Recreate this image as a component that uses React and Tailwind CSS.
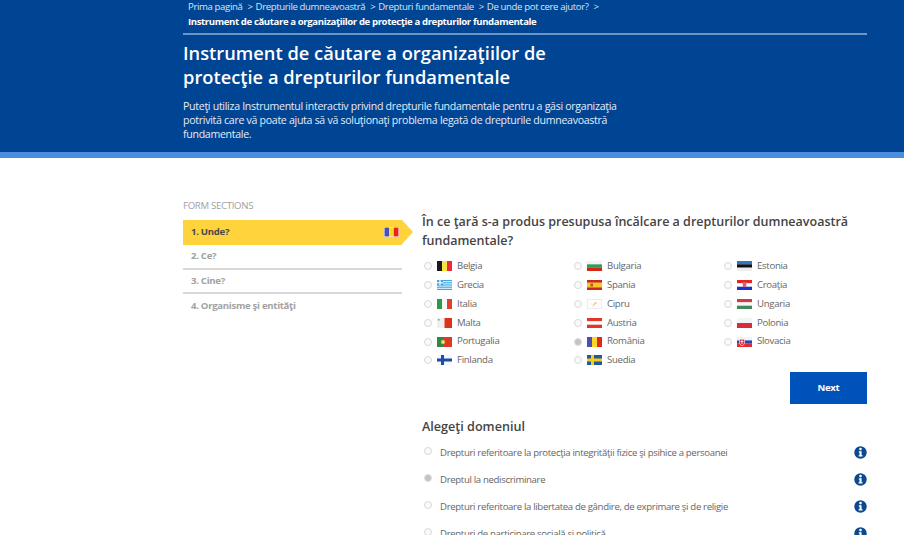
const Stripes = ({ c, v }) => (
  <svg width="15" height="10" viewBox="0 0 15 10" className="shrink-0">
    {c.map((col, i) =>
      v ? (
        <rect key={i} x={(i * 15) / c.length} y="0" width={15 / c.length + 0.1} height="10" fill={col} />
      ) : (
        <rect key={i} x="0" y={(i * 10) / c.length} width="15" height={10 / c.length + 0.1} fill={col} />
      )
    )}
  </svg>
);

const Svg = ({ children }) => (
  <svg width="15" height="10" viewBox="0 0 15 10" className="shrink-0">
    {children}
  </svg>
);

const flags = {
  be: <Stripes v c={["#1a1a1a", "#fae042", "#ed2939"]} />,
  bg: <Stripes c={["#f2f2f2", "#2e9b5f", "#d62612"]} />,
  ee: <Stripes c={["#2f76c9", "#111111", "#eeeeee"]} />,
  gr: (
    <Svg>
      <rect width="15" height="10" fill="#f4f9fd" />
      {[0, 2.2, 4.4, 6.6, 8.8].map((y) => (
        <rect key={y} y={y} width="15" height="1.2" fill="#3fa7e6" />
      ))}
      <rect width="6" height="5.5" fill="#3fa7e6" />
      <rect x="2.4" width="1.2" height="5.5" fill="#fff" />
      <rect y="2.2" width="6" height="1.1" fill="#fff" />
    </Svg>
  ),
  es: (
    <Svg>
      <rect width="15" height="10" fill="#c9281c" />
      <rect y="2.5" width="15" height="5" fill="#f6c52c" />
      <rect x="3.5" y="3.5" width="2.5" height="3" fill="#b5562a" />
    </Svg>
  ),
  hr: (
    <Svg>
      <rect width="15" height="3.4" fill="#e5261f" />
      <rect y="3.4" width="15" height="3.3" fill="#fff" />
      <rect y="6.7" width="15" height="3.3" fill="#1c2fd0" />
      <rect x="5.7" y="2.2" width="3.6" height="4.6" fill="#d8606a" />
    </Svg>
  ),
  it: <Stripes v c={["#2b9a46", "#f6f6f6", "#e0402f"]} />,
  cy: (
    <Svg>
      <rect x="0.25" y="0.25" width="14.5" height="9.5" fill="#fdfdfd" stroke="#dddddd" strokeWidth="0.5" />
      <path d="M5.5 6.5 L8 3.5 L10 3.2 L9 5 L7 6 L6 7.5 Z" fill="#eec26c" />
    </Svg>
  ),
  hu: <Stripes c={["#cf3a46", "#f7f7f7", "#3f8a5c"]} />,
  mt: (
    <Svg>
      <rect width="7.5" height="10" fill="#f0f0f0" />
      <rect x="7.5" width="7.5" height="10" fill="#dc3218" />
      <rect x="1" y="1" width="1.6" height="1.6" fill="#999" />
    </Svg>
  ),
  at: <Stripes c={["#e5352b", "#ffffff", "#e5352b"]} />,
  pl: <Stripes c={["#f4f4f4", "#dc2a3c"]} />,
  pt: (
    <Svg>
      <rect width="6" height="10" fill="#2c8a42" />
      <rect x="6" width="9" height="10" fill="#dd3a26" />
      <circle cx="6" cy="5" r="2.2" fill="#e8b83c" />
      <circle cx="6" cy="5" r="1.1" fill="#e8e8e8" />
    </Svg>
  ),
  ro: <Stripes v c={["#4a4fb0", "#fbd626", "#e0281c"]} />,
  sk: (
    <Svg>
      <rect width="15" height="3.4" fill="#f3f3f3" />
      <rect y="3.4" width="15" height="3.3" fill="#2248b8" />
      <rect y="6.7" width="15" height="3.3" fill="#e32b2b" />
      <path d="M2.5 2.2 H7.5 V6 Q7.5 8 5 8.7 Q2.5 8 2.5 6 Z" fill="#dd2b2b" stroke="#fff" strokeWidth="0.6" />
      <rect x="4.6" y="3" width="0.8" height="4" fill="#fff" />
      <rect x="3.6" y="4" width="2.8" height="0.8" fill="#fff" />
    </Svg>
  ),
  fi: (
    <Svg>
      <rect width="15" height="10" fill="#f6f8fb" />
      <rect x="4" width="3" height="10" fill="#1a4fa8" />
      <rect y="3.5" width="15" height="3" fill="#1a4fa8" />
    </Svg>
  ),
  se: (
    <Svg>
      <rect width="15" height="10" fill="#1f5a9e" />
      <rect x="4" width="3" height="10" fill="#f8cc1c" />
      <rect y="3.5" width="15" height="3" fill="#f8cc1c" />
    </Svg>
  ),
};

const countries = [
  ["Belgia", "be"], ["Bulgaria", "bg"], ["Estonia", "ee"],
  ["Grecia", "gr"], ["Spania", "es"], ["Croaţia", "hr"],
  ["Italia", "it"], ["Cipru", "cy"], ["Ungaria", "hu"],
  ["Malta", "mt"], ["Austria", "at"], ["Polonia", "pl"],
  ["Portugalia", "pt"], ["România", "ro"], ["Slovacia", "sk"],
  ["Finlanda", "fi"], ["Suedia", "se"],
];

const Radio = ({ checked }) => (
  <span className="flex h-[8px] w-[8px] shrink-0 items-center justify-center rounded-full border border-[#d9d9d9] bg-[#fafafa]">
    {checked && <span className="h-[6px] w-[6px] rounded-full bg-[#c4c4c4]" />}
  </span>
);

const Info = () => (
  <svg width="13" height="13" viewBox="0 0 13 13" className="shrink-0">
    <circle cx="6.5" cy="6.5" r="6.2" fill="#0b4a8f" />
    <circle cx="6.5" cy="3.1" r="1.3" fill="#fff" />
    <path d="M4.8 5.3 H7.6 V9.2 H8.5 V10.4 H4.6 V9.2 H5.5 V6.5 H4.8 Z" fill="#fff" />
  </svg>
);

const domains = [
  ["Drepturi referitoare la protecţia integrităţii fizice şi psihice a persoanei", false],
  ["Dreptul la nediscriminare", true],
  ["Drepturi referitoare la libertatea de gândire, de exprimare şi de religie", false],
  ["Drepturi de participare socială şi politică", false],
];

const crumbs = ["Prima pagină", "Drepturile dumneavoastră", "Drepturi fundamentale", "De unde pot cere ajutor?"];

export default function App() {
  return (
    <div className="h-[535px] w-[904px] overflow-hidden bg-white font-['Open_Sans',sans-serif]">
      <header className="h-[158px] border-b-[6px] border-[#4a8ede] bg-[#004494] text-white">
        <div className="mx-[183px] w-[684px]">
          <div className="border-b-2 border-[#6f94c6] pl-[5px] leading-[15px]">
            <div className="flex h-[13px] items-center gap-[3px] text-[9.6px] tracking-[-0.37px] text-[#dbe5f1]">
              {crumbs.map((c) => (
                <span key={c} className="whitespace-nowrap">
                  {c}
                  <span className="ml-[5px]">&gt;</span>
                </span>
              ))}
            </div>
            <div className="mt-[1px] h-[19px] text-[9.6px] font-bold tracking-[-0.39px] text-white">
              Instrument de căutare a organizaţiilor de protecţie a drepturilor fundamentale
            </div>
          </div>
          <h1 className="mt-[6px] w-[400px] text-[18.3px] font-semibold leading-[24px]">
            Instrument de căutare a organizaţiilor de protecţie a drepturilor fundamentale
          </h1>
          <p className="mt-[9.5px] w-[445px] text-[10.6px] leading-[14.2px] tracking-[-0.3px] text-[#e6edf6]">
            Puteţi utiliza Instrumentul interactiv privind drepturile fundamentale pentru a găsi organizaţia potrivită care vă poate ajuta să vă soluţionaţi problema legată de drepturile dumneavoastră fundamentale.
          </p>
        </div>
      </header>

      <main className="mx-[183px] flex w-[684px] gap-[20px] pt-[41px]">
        <aside className="w-[219px] shrink-0">
          <div className="text-[9.6px] leading-[14px] tracking-[-0.3px] text-[#a0a0a0]">FORM SECTIONS</div>
          <div className="relative mt-[7px] flex h-[24.5px] items-center justify-between bg-[#fed33c] pl-[8px] pr-[3px] text-[9.6px] font-bold tracking-[-0.3px] text-[#4a4a4a]">
            <span>1. Unde?</span>
            <span>
              <svg width="15" height="10" viewBox="0 0 15 10">
                <rect width="15" height="10" fill="#ffffff" />
                <rect x="0.5" y="0.5" width="4.7" height="9" fill="#4a4fb0" />
                <rect x="5.2" y="0.5" width="4.6" height="9" fill="#fbd626" />
                <rect x="9.8" y="0.5" width="4.7" height="9" fill="#e0281c" />
              </svg>
            </span>
            <span className="absolute left-full top-0 h-0 w-0 border-y-[12.25px] border-l-[11px] border-y-transparent border-l-[#fed33c]" />
          </div>
          <div className="flex h-[25px] items-center border-b-2 border-[#d8d8d8] pl-[8px] text-[9.6px] font-bold tracking-[-0.3px] text-[#a2a2a2]">2. Ce?</div>
          <div className="flex h-[24.5px] items-center border-b-2 border-[#d8d8d8] pl-[8px] text-[9.6px] font-bold tracking-[-0.3px] text-[#a2a2a2]">3. Cine?</div>
          <div className="flex h-[24px] items-center pl-[8px] text-[9.6px] font-bold tracking-[-0.3px] text-[#a2a2a2]">4. Organisme şi entităţi</div>
        </aside>

        <section className="w-[445px] pt-[13px]">
          <h2 className="text-[12.5px] font-semibold leading-[19px] text-[#444444]">
            În ce ţară s-a produs presupusa încălcare a drepturilor dumneavoastră fundamentale?
          </h2>
          <div className="mt-[7px] grid grid-cols-[150px_150px_1fr] pl-[2px]">
            {countries.map(([name, code]) => (
              <div key={name} className="flex h-[18.8px] items-center gap-[5px]">
                <Radio checked={name === "România"} />
                <span>{flags[code]}</span>
                <span className="text-[9.6px] tracking-[-0.3px] text-[#666666]">{name}</span>
              </div>
            ))}
          </div>
          <div className="mt-[2px] flex justify-end">
            <button className="h-[32px] w-[77px] bg-[#0052bb] text-[9.6px] font-bold tracking-[-0.3px] text-white">Next</button>
          </div>
          <h3 className="mt-[14px] text-[12.6px] font-semibold leading-[18px] text-[#444444]">Alegeţi domeniul</h3>
          <div className="mt-[3.5px]">
            {domains.map(([label, checked]) => (
              <div key={label} className="flex h-[27px] items-center justify-between">
                <div className="flex items-center gap-[8px] pl-[2px]">
                  <span className="-mt-[4px]"><Radio checked={checked} /></span>
                  <span className="text-[9.6px] tracking-[-0.33px] text-[#666666]">{label}</span>
                </div>
                <span><Info /></span>
              </div>
            ))}
          </div>
        </section>
      </main>
    </div>
  );
}
